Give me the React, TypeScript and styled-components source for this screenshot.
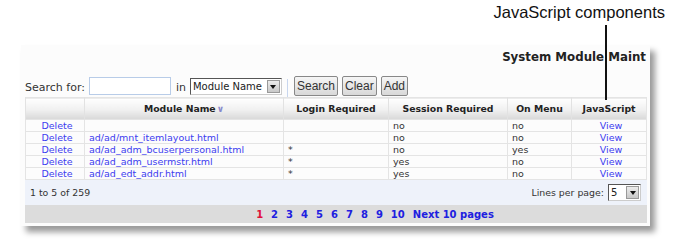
import styled, { createGlobalStyle } from "styled-components";

const GlobalStyle = createGlobalStyle`
  body {
    margin: 0;
    background: #fff;
    font-family: "DejaVu Sans", Verdana, sans-serif;
  }
`;

const Page = styled.div`
  position: relative;
  width: 675px;
  height: 244px;
  overflow: hidden;
`;

const Caption = styled.div`
  font-family: "Liberation Sans", Arial, sans-serif;
  font-size: 16.5px;
  line-height: 19px;
  text-align: right;
  padding: 3px 10px 0 0;
  color: #111;
`;

const Callout = styled.div`
  position: absolute;
  left: 605px;
  top: 25px;
  width: 2px;
  height: 75px;
  background: #111;
`;

const Panel = styled.div`
  margin: 23px 0 0 21px;
  width: 629px;
  padding: 0 3px 0 4px;
  box-sizing: border-box;
  background: #fcfcfc;
  box-shadow: 5px 6px 6px rgba(0, 0, 0, 0.4);
`;

const Title = styled.div`
  font-weight: bold;
  font-size: 11.8px;
  color: #222;
  text-align: right;
  padding: 5px 1px 0 0;
  height: 30px;
  box-sizing: border-box;
`;

const Toolbar = styled.div`
  display: flex;
  align-items: flex-end;
  height: 22px;
  font-size: 11px;
  color: #333;
`;

const Label = styled.span<{ $gap?: number }>`
  margin-right: ${(p) => p.$gap ?? 4}px;
  padding-bottom: 3px;
`;

const TextBox = styled.div`
  width: 80px;
  height: 16px;
  border: 1px solid #b8cce8;
  background: #fff;
  margin: 0 5px 2px 0;
`;

const SelectBox = styled.div<{ $w: number }>`
  display: flex;
  align-items: center;
  width: ${(p) => p.$w}px;
  height: 17px;
  border: 1px solid #555;
  border-right-color: #ccc;
  border-bottom-color: #ccc;
  background: #fff;
  font-size: 10px;
  color: #222;
  padding-left: 2px;
  box-sizing: border-box;
  justify-content: space-between;
  white-space: nowrap;
`;

const Arrow = styled.span`
  flex-shrink: 0;
  width: 13px;
  height: 13px;
  margin-right: 1px;
  background: linear-gradient(#ececec, #c8c8c8);
  border: 1px solid #999;
  box-sizing: border-box;
  display: flex;
  align-items: center;
  justify-content: center;
  &::after {
    content: "";
    border-left: 3px solid transparent;
    border-right: 3px solid transparent;
    border-top: 4px solid #111;
  }
`;

const Divider = styled.span`
  width: 1px;
  height: 18px;
  background: #c8d6ee;
  margin: 0 6px 0 5px;
`;

const Button = styled.button`
  font-family: "Liberation Sans", Arial, sans-serif;
  font-size: 12px;
  color: #333;
  height: 20px;
  padding: 0 2px;
  margin-right: 4px;
  margin-bottom: 1px;
  border: 1px solid #888;
  border-radius: 2px;
  background: linear-gradient(#f6f6f6, #d8d8d8);
`;

const Table = styled.table`
  width: 622px;
  border-collapse: collapse;
  font-size: 9.5px;
  color: #333;
  border: 1px solid #e4e4e4;
`;

const Th = styled.th`
  height: 21px;
  padding: 0;
  font-size: 9.3px;
  font-weight: bold;
  color: #222;
  background: linear-gradient(#ffffff 0%, #f0f0f0 55%, #d8d8d8 100%);
  border-left: 1px solid #e2e2e2;
`;

const Td = styled.td<{ $center?: boolean }>`
  height: 11px;
  padding: 0 0 0 4px;
  line-height: 11px;
  border: 1px solid #e4e4e4;
  text-align: ${(p) => (p.$center ? "center" : "left")};
  white-space: nowrap;
`;

const Link = styled.a`
  color: #3c3cf0;
  text-decoration: none;
`;

const SortMark = styled.span`
  color: #8888cc;
  font-size: 9px;
  margin-left: 1px;
`;

const Summary = styled.div`
  display: flex;
  align-items: center;
  justify-content: space-between;
  height: 25px;
  padding: 0 6px 0 5px;
  background: #eef2fa;
  font-size: 9.4px;
  color: #333;
  width: 622px;
  box-sizing: border-box;
`;

const PerPage = styled.div`
  display: flex;
  align-items: center;
  gap: 4px;
`;

const Pager = styled.div`
  display: flex;
  align-items: center;
  justify-content: center;
  gap: 8px;
  height: 18px;
  width: 622px;
  background: #dcdcdc;
  font-size: 10px;
  font-weight: bold;
  padding-left: 78px;
  box-sizing: border-box;
`;

const PageLink = styled.a<{ $current?: boolean }>`
  color: ${(p) => (p.$current ? "#e0103a" : "#2020e0")};
  text-decoration: none;
`;

const Bottom = styled.div`
  height: 3px;
`;

const rows = [
  { file: "", login: "", session: "no", menu: "no" },
  { file: "ad/ad/mnt_itemlayout.html", login: "", session: "no", menu: "no" },
  { file: "ad/ad_adm_bcuserpersonal.html", login: "*", session: "no", menu: "yes" },
  { file: "ad/ad_adm_usermstr.html", login: "*", session: "yes", menu: "no" },
  { file: "ad/ad_edt_addr.html", login: "*", session: "yes", menu: "no" },
];

export default function App() {
  return (
    <Page>
      <GlobalStyle />
      <Caption>JavaScript components</Caption>
      <Panel>
        <Title>System Module Maint</Title>
        <Toolbar>
          <Label>Search for:</Label>
          <TextBox />
          <Label $gap={4}>in</Label>
          <SelectBox $w={92} style={{ marginBottom: 2 }}>
            Module Name
            <Arrow />
          </SelectBox>
          <Divider />
          <Button>Search</Button>
          <Button>Clear</Button>
          <Button>Add</Button>
        </Toolbar>
        <Table>
          <colgroup>
            <col style={{ width: 59 }} />
            <col style={{ width: 199 }} />
            <col style={{ width: 105 }} />
            <col style={{ width: 119 }} />
            <col style={{ width: 64 }} />
            <col />
          </colgroup>
          <thead>
            <tr>
              <Th />
              <Th>
                Module Name<SortMark>&#8744;</SortMark>
              </Th>
              <Th>Login Required</Th>
              <Th>Session Required</Th>
              <Th>On Menu</Th>
              <Th>JavaScript</Th>
            </tr>
          </thead>
          <tbody>
            {rows.map((r, i) => (
              <tr key={i}>
                <Td $center>
                  <Link href="#">Delete</Link>
                </Td>
                <Td>
                  <Link href="#">{r.file}</Link>
                </Td>
                <Td>{r.login}</Td>
                <Td>{r.session}</Td>
                <Td>{r.menu}</Td>
                <Td $center>
                  <Link href="#">View</Link>
                </Td>
              </tr>
            ))}
          </tbody>
        </Table>
        <Summary>
          <span>1 to 5 of 259</span>
          <PerPage>
            Lines per page:
            <SelectBox $w={33}>
              5
              <Arrow />
            </SelectBox>
          </PerPage>
        </Summary>
        <Pager>
          <PageLink $current>1</PageLink>
          {[2, 3, 4, 5, 6, 7, 8, 9, 10].map((n) => (
            <PageLink key={n} href="#">
              {n}
            </PageLink>
          ))}
          <PageLink href="#">Next 10 pages</PageLink>
        </Pager>
        <Bottom />
      </Panel>
      <Callout />
    </Page>
  );
}
